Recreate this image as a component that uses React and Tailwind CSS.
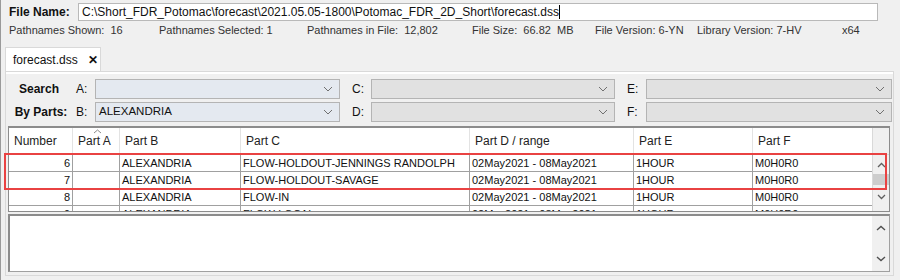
import React from "react";

const cols = "grid-cols-[64px_47px_121px_229px_164px_119px_119px]";

function Chevron({ className = "" }) {
  return (
    <svg width="10" height="6" viewBox="0 0 10 6" className={className}>
      <path d="M1 1 L5 5 L9 1" fill="none" stroke="#707070" strokeWidth="1" />
    </svg>
  );
}

function Combo({ value = "", blue }) {
  return (
    <div
      className={`flex items-center h-[20px] border border-[#b4b4b4] ${
        blue ? "bg-[#e4e9f0]" : "bg-[#e1e1e1]"
      }`}
    >
      <span className="flex-1 pl-[3px] text-[11.5px] text-[#111]">{value}</span>
      <Chevron className="mr-[6px]" />
    </div>
  );
}

const rows = [
  ["6", "", "ALEXANDRIA", "FLOW-HOLDOUT-JENNINGS RANDOLPH", "02May2021 - 08May2021", "1HOUR", "M0H0R0"],
  ["7", "", "ALEXANDRIA", "FLOW-HOLDOUT-SAVAGE", "02May2021 - 08May2021", "1HOUR", "M0H0R0"],
  ["8", "", "ALEXANDRIA", "FLOW-IN", "02May2021 - 08May2021", "1HOUR", "M0H0R0"],
  ["9", "", "ALEXANDRIA", "FLOW-LOCAL", "02May2021 - 08May2021", "1HOUR", "M0H0R0"],
];

const headers = ["Number", "Part A", "Part B", "Part C", "Part D / range", "Part E", "Part F"];

export default function App() {
  return (
    <div
      className="relative w-[900px] h-[280px] overflow-hidden bg-[#f0f0f0] border-l border-[#9a9a9a] text-[#222]"
      style={{ fontFamily: '"Liberation Sans", Arial, sans-serif' }}
    >
      {/* File name row */}
      <div className="flex items-center pt-[3px] pl-[8px] h-[21px]">
        <span className="w-[69px] font-bold text-[12px] text-[#111]">File Name:</span>
        <div className="w-[800px] h-[18px] bg-white border border-[#b9b9b9] flex items-center pl-[3px] text-[12px] text-[#111]">
          C:\Short_FDR_Potomac\forecast\2021.05.05-1800\Potomac_FDR_2D_Short\forecast.dss
          <span className="inline-block w-px h-[14px] bg-black" />
        </div>
      </div>

      {/* Info row */}
      <div className="flex pl-[8px] mt-[2px] h-[14px] items-center text-[11px] text-[#333] whitespace-pre">
        <span className="w-[150px]">Pathnames Shown:  16</span>
        <span className="w-[148px]">Pathnames Selected: 1</span>
        <span className="w-[165px]">Pathnames in File:  12,802</span>
        <span className="w-[123px]">File Size:  66.82  MB</span>
        <span className="w-[102px]">File Version: 6-YN</span>
        <span className="w-[145px]">Library Version: 7-HV</span>
        <span>x64</span>
      </div>

      {/* Tab */}
      <div className="pl-[4px] mt-[10px] flex">
        <div className="h-[24px] w-[96px] bg-white border border-b-0 border-[#d9d9d9] flex items-center pl-[7px] text-[12px] text-[#111]">
          forecast.dss
          <span className="ml-[10px] font-bold text-[12px]">✕</span>
        </div>
      </div>

      {/* Panel */}
      <div className="ml-[4px] mr-[6px] border border-[#d9d9d9] h-[205px] flex flex-col">
        <div className="h-[2px] bg-white" />
        {/* Search by parts */}
        <div className="flex mt-[5px] pr-[1px]">
          <div className="w-[70px] flex flex-col items-center font-bold text-[12px] text-[#111]">
            <div className="h-[20px] flex items-center ml-[-4px]">Search</div>
            <div className="h-[20px] mt-[3px] flex items-center">By Parts:</div>
          </div>
          <div className="flex-1 grid grid-cols-[19px_245px_12px_19px_244px_12px_19px_1fr] gap-y-[3px] text-[12px] text-[#111]">
            <div className="flex items-center">A:</div>
            <Combo blue />
            <div />
            <div className="flex items-center">C:</div>
            <Combo />
            <div />
            <div className="flex items-center">E:</div>
            <Combo />
            <div className="flex items-center">B:</div>
            <Combo blue value="ALEXANDRIA" />
            <div />
            <div className="flex items-center">D:</div>
            <Combo />
            <div />
            <div className="flex items-center">F:</div>
            <Combo />
          </div>
        </div>

        {/* Table */}
        <div className="mt-[4px] ml-[2px] mr-[3px] h-[86px] border border-[#8c8c8c] border-t-2 border-t-[#8c8c8c] bg-white flex overflow-hidden">
          <div className="flex-1 flex flex-col">
            <div className={`grid ${cols} h-[27px] shrink-0 border-b border-[#d9d9d9]`}>
              {headers.map((h, i) => (
                <div
                  key={h}
                  className={`relative flex items-end pb-[4px] pl-[5px] text-[12px] text-[#222] ${
                    i < 6 ? "border-r border-[#e3e3e3]" : ""
                  }`}
                >
                  {i === 1 && (
                    <svg width="9" height="5" viewBox="0 0 9 5" className="absolute top-[1px] left-[20px]">
                      <path d="M1 4 L4.5 1 L8 4" fill="none" stroke="#8a8a8a" strokeWidth="1" />
                    </svg>
                  )}
                  {h}
                </div>
              ))}
            </div>
            {rows.map((r) => (
              <div key={r[0]} className={`grid ${cols} h-[17px] shrink-0 border-b border-[#a0a0a0]`}>
                {r.map((c, i) => (
                  <div
                    key={i}
                    className={`flex items-center text-[11px] text-[#111] whitespace-nowrap overflow-hidden ${
                      i === 0 ? "justify-end pr-[2px]" : "pl-[2px]"
                    } ${i < 6 ? "border-r border-[#a0a0a0]" : ""}`}
                  >
                    {c}
                  </div>
                ))}
              </div>
            ))}
          </div>
          {/* scrollbar */}
          <div className="w-[19px] flex flex-col border-l border-[#d9d9d9]">
            <div className="h-[27px] bg-[#f0f0f0] border-b border-[#d9d9d9]" />
            <div className="flex-1 bg-[#f0f0f0] flex flex-col items-center">
              <svg width="9" height="6" viewBox="0 0 9 6" className="mt-[7px]">
                <path d="M1 5 L4.5 1.5 L8 5" fill="none" stroke="#606060" strokeWidth="1.3" />
              </svg>
              <div className="mt-[6px] w-[17px] h-[11px] bg-[#cdcdcd]" />
              <svg width="9" height="6" viewBox="0 0 9 6" className="mt-[9px]">
                <path d="M1 1 L4.5 4.5 L8 1" fill="none" stroke="#606060" strokeWidth="1.3" />
              </svg>
            </div>
          </div>
        </div>

        {/* Bottom text area */}
        <div className="mt-[2px] ml-[2px] mr-[3px] h-[58px] border border-[#a0a0a0] border-t-2 border-l-2 border-t-[#8c8c8c] border-l-[#8c8c8c] bg-white flex">
          <div className="flex-1" />
          <div className="w-[17px] bg-[#f0f0f0] flex flex-col items-center justify-between py-[9px]">
            <svg width="10" height="6" viewBox="0 0 10 6">
              <path d="M1 5 L5 1.5 L9 5" fill="none" stroke="#505050" strokeWidth="1.4" />
            </svg>
            <svg width="10" height="6" viewBox="0 0 10 6">
              <path d="M1 1 L5 4.5 L9 1" fill="none" stroke="#505050" strokeWidth="1.4" />
            </svg>
          </div>
        </div>
      </div>

      {/* Red highlight */}
      <div className="absolute left-[3px] top-[153px] w-[883px] h-[37px] border-2 border-[#e94242] pointer-events-none" />
    </div>
  );
}
